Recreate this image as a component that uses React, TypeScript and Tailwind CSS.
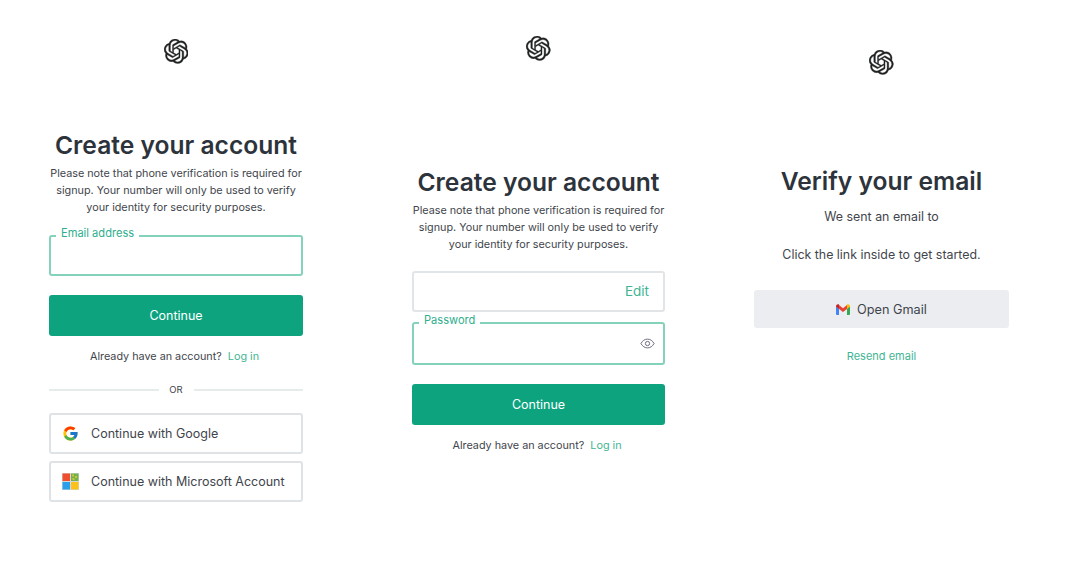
import React from "react";
import { SiOpenai } from "react-icons/si";
import { FcGoogle } from "react-icons/fc";

const Eye = () => (
  <svg width="15" height="15" viewBox="0 0 24 24" fill="none" stroke="#6e6e80" strokeWidth="1.6">
    <path d="M1.5 12C4 7.5 7.5 5 12 5s8 2.5 10.5 7c-2.5 4.5-6 7-10.5 7S4 16.5 1.5 12z" />
    <circle cx="12" cy="12" r="3.4" />
  </svg>
);

const Gmail = () => (
  <svg width="14" height="11" viewBox="0 0 14 11" fill="none">
    <path d="M0 2v8a1 1 0 0 0 1 1h2V4.5z" fill="#4285f4" />
    <path d="M14 2v8a1 1 0 0 1-1 1h-2V4.5z" fill="#34a853" />
    <path d="M3 5V1L7 4.2 11 1v4L7 8z" fill="#ea4335" />
    <path d="M0 2.3C0 .6 2-.4 3 .6V5L0 2.6z" fill="#c5221f" />
    <path d="M14 2.3c0-1.7-2-2.7-3-1.7V5l3-2.4z" fill="#fbbc04" />
  </svg>
);

const Microsoft = () => (
  <svg width="17" height="17" viewBox="0 0 17 17">
    <rect width="17" height="17" fill="#d4d8d8" />
    <rect x="0.5" y="0.5" width="7.5" height="7.5" fill="#ef4f2e" />
    <rect x="9" y="0.5" width="7.5" height="7.5" fill="#76b04e" />
    <rect x="10" y="1.5" width="2" height="2" fill="#c4c832" />
    <rect x="13" y="3" width="2" height="2" fill="#c4c832" />
    <rect x="10.5" y="5" width="2" height="2" fill="#c4c832" />
    <rect x="0.5" y="9" width="7.5" height="7.5" fill="#2a9fec" />
    <rect x="9" y="9" width="7.5" height="7.5" fill="#fcc11a" />
  </svg>
);

const Logo = () => <SiOpenai size={24.5} color="#202123" stroke="#202123" strokeWidth={0.35} />;

const Intro = () => (
  <p className="mt-[4px] text-center text-[10.8px] leading-[17px] text-[#3f454c] whitespace-nowrap">
    Please note that phone verification is required for
    <br />
    signup. Your number will only be used to verify
    <br />
    your identity for security purposes.
  </p>
);

const Heading = ({ children }: { children: React.ReactNode }) => (
  <h1 className="text-center text-[24.6px] leading-[32px] font-semibold text-[#2d333a] whitespace-nowrap">{children}</h1>
);

const Primary = () => (
  <button className="flex h-[41px] w-full items-center justify-center rounded-[3px] bg-[#0ea37f] pt-[2px] text-[12.5px] text-white">
    Continue
  </button>
);

const LoginLine = () => (
  <p className="pr-[3px] text-center text-[10.8px] leading-[17px] text-[#3f454c]">
    Already have an account?<span className="ml-[6px] text-[#3fb594]">Log in</span>
  </p>
);

const Floating = ({ label, height, children }: { label: string; height: string; children?: React.ReactNode }) => (
  <div className={`relative flex w-full items-center justify-end rounded-[3px] border-2 border-[#84d2bc] px-[8px] ${height}`}>
    <span className="absolute left-[5px] top-[-12px] bg-white px-[5px] text-[11.1px] leading-[16px] text-[#2fae8e]">
      {label}
    </span>
    {children}
  </div>
);

const Social = ({ icon, children }: { icon: React.ReactNode; children: React.ReactNode }) => (
  <button className="flex h-[41px] w-full items-center rounded-[3px] border-2 border-[#e0e3e6] pl-[11px] text-[12.5px] text-[#3f454c]">
    <span className="flex w-[17px] items-center justify-center">{icon}</span>
    <span className="ml-[12px] translate-y-px">{children}</span>
  </button>
);

export default function App() {
  return (
    <div
      className="flex h-[574px] w-[1080px] items-start bg-white pl-[49px]"
      style={{ fontFamily: "Inter, 'Noto Sans', sans-serif" }}
    >
      <section className="flex w-[254px] flex-col items-center pt-[39px]">
        <Logo />
        <div className="mt-[65px]"><Heading>Create your account</Heading></div>
        <Intro />
        <div className="mt-[19px] w-full">
          <Floating label="Email address" height="h-[41px]" />
        </div>
        <div className="mt-[19px] w-full"><Primary /></div>
        <div className="mt-[12px]"><LoginLine /></div>
        <div className="mt-[17px] flex w-full items-center">
          <div className="h-[2px] flex-1 bg-[#e6ecea]" />
          <span className="w-[35px] text-center text-[9.5px] leading-[16px] text-[#3f454c]">OR</span>
          <div className="h-[2px] flex-1 bg-[#e6ecea]" />
        </div>
        <div className="mt-[15px] flex w-full flex-col gap-[7px]">
          <Social icon={<FcGoogle size={17} />}>Continue with Google</Social>
          <Social icon={<Microsoft />}>Continue with Microsoft Account</Social>
        </div>
      </section>

      <section className="ml-[109px] flex w-[253px] flex-col items-center pt-[36px]">
        <Logo />
        <div className="mt-[105px]"><Heading>Create your account</Heading></div>
        <Intro />
        <div className="mt-[18px] flex h-[41px] w-full items-center justify-end rounded-[3px] border-2 border-[#e2e5e8] pt-px pr-[14px] text-[13.5px] text-[#3fb594]">
          Edit
        </div>
        <div className="mt-[10px] w-full">
          <Floating label="Password" height="h-[43px]"><Eye /></Floating>
        </div>
        <div className="mt-[19px] w-full"><Primary /></div>
        <div className="mt-[12px]"><LoginLine /></div>
      </section>

      <section className="ml-[89px] flex w-[255px] flex-col items-center pt-[50px]">
        <Logo />
        <div className="mt-[90px]"><Heading>Verify your email</Heading></div>
        <p className="mt-[10px] text-center text-[12.4px] leading-[19px] text-[#3f454c]">We sent an email to</p>
        <p className="mt-[19px] text-center text-[12.4px] leading-[19px] text-[#3f454c]">Click the link inside to get started.</p>
        <button className="mt-[26px] flex h-[38px] w-full items-center justify-center gap-[7px] rounded-[3px] bg-[#ebedf0] pt-[2px] text-[12.7px] text-[#3f454c]">
          <Gmail />
          Open Gmail
        </button>
        <p className="mt-[20px] text-center text-[11px] leading-[17px] text-[#3fb594]">Resend email</p>
      </section>
    </div>
  );
}
